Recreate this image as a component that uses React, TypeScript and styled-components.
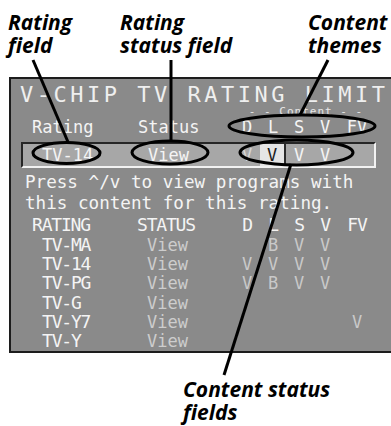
import styled, { createGlobalStyle } from "styled-components";

const GlobalStyle = createGlobalStyle`
  html, body {
    margin: 0;
    padding: 0;
    background: #fff;
  }
`;

const COLS = "107px 106px 26px 26px 26px 26px 38px";
const SEL_COLS = "105px 106px 26px 26px 26px 26px 36px";

const Page = styled.div`
  position: relative;
  width: 391px;
  height: 426px;
  overflow: hidden;
  background: #fff;
`;

const Callouts = styled.div`
  height: 77px;
  box-sizing: border-box;
  padding: 11px 0 0 8px;
  display: grid;
  grid-template-columns: 112px 188px 1fr;
`;

const Label = styled.div`
  font-family: "Open Sans", "DejaVu Sans", sans-serif;
  font-style: italic;
  font-weight: 700;
  font-size: 21px;
  line-height: 23px;
  color: #000;
  white-space: nowrap;
`;

const BottomLabel = styled(Label)`
  margin: 25px 0 0 183px;
`;

const Panel = styled.div`
  margin-left: 9px;
  width: 400px;
  height: 276px;
  box-sizing: border-box;
  border: 2px solid #1c1c1c;
  border-right: none;
  background: #8a8a8a;
  padding-top: 4px;
`;

const Heading = styled.div`
  font-family: "DejaVu Sans Mono", monospace;
  font-size: 22px;
  line-height: 24px;
  letter-spacing: 3.5px;
  color: #efefef;
  padding-left: 9px;
  white-space: nowrap;
`;

const Row = styled.div<{ $h: number }>`
  display: grid;
  grid-template-columns: ${COLS};
  grid-auto-rows: auto;
  margin-left: 10px;
  width: 355px;
  height: ${p => p.$h}px;
  align-items: center;
`;

const SubHeader = styled.div`
  display: grid;
  grid-template-columns: ${COLS};
  grid-template-rows: 10px 20px;
  margin-left: 10px;
  width: 355px;
  height: 32px;
  align-items: center;
`;

const ContentTag = styled.div`
  grid-column: 3 / 8;
  grid-row: 1;
  text-align: center;
  font-family: "DejaVu Sans Mono", monospace;
  font-size: 11px;
  line-height: 10px;
  letter-spacing: 1px;
  color: #e8e8e8;
  padding-left: 2px;
`;

const Cell = styled.div<{ $pad?: number; $center?: boolean; $tone?: string; $row?: number }>`
  font-family: "DejaVu Sans Mono", monospace;
  font-size: 17px;
  line-height: 20px;
  color: ${p => p.$tone ?? "#f4f4f4"};
  padding-left: ${p => p.$pad ?? 0}px;
  text-align: ${p => (p.$center ? "center" : "left")};
  white-space: nowrap;
  ${p => (p.$row ? `grid-row: ${p.$row};` : "")}
`;

const TableCell = styled(Cell)`
  font-size: 18px;
  letter-spacing: -1.2px;
`;

const SelectedRow = styled.div`
  display: grid;
  grid-template-columns: ${SEL_COLS};
  margin: 3px 0 0 10px;
  width: 355px;
  height: 26px;
  box-sizing: border-box;
  border-top: 2px solid #262626;
  border-left: 2px solid #262626;
  border-bottom: 2px solid #f2f2f2;
  border-right: 2px solid #f2f2f2;
  background: #a7a7a7;
  align-items: center;
`;

const ActiveCell = styled(Cell)`
  align-self: stretch;
  display: flex;
  align-items: center;
  justify-content: center;
  background: #e5e5e5;
  color: #1e1e1e;
  border-right: 2px solid #2a2a2a;
`;

const Hint = styled.div`
  font-family: "DejaVu Sans Mono", monospace;
  font-size: 17.6px;
  line-height: 21px;
  color: #f4f4f4;
  margin-top: 4px;
  padding-left: 14px;
  white-space: pre;
`;

const Overlay = styled.svg`
  position: absolute;
  left: 0;
  top: 0;
  pointer-events: none;
`;

const THEMES = ["D", "L", "S", "V", "FV"];

const RATINGS: { name: string; marks: string[] }[] = [
  { name: "TV-MA", marks: ["", "B", "V", "V", ""] },
  { name: "TV-14", marks: ["V", "V", "V", "V", ""] },
  { name: "TV-PG", marks: ["V", "B", "V", "V", ""] },
  { name: "TV-G", marks: ["", "", "", "", ""] },
  { name: "TV-Y7", marks: ["", "", "", "", "V"] },
  { name: "TV-Y", marks: ["", "", "", "", ""] },
];

export default function App() {
  return (
    <Page>
      <GlobalStyle />
      <Callouts>
        <Label>Rating<br />field</Label>
        <Label>Rating<br />status field</Label>
        <Label>Content<br />themes</Label>
      </Callouts>

      <Panel>
        <Heading>V-CHIP TV RATING LIMIT</Heading>

        <SubHeader>
          <ContentTag>- - Content - -</ContentTag>
          <Cell $row={2} $pad={11}>Rating</Cell>
          <Cell $row={2} $pad={10}>Status</Cell>
          {THEMES.map(t => (
            <Cell key={t} $row={2} $center>{t}</Cell>
          ))}
        </SubHeader>

        <SelectedRow>
          <Cell $pad={19}>TV-14</Cell>
          <Cell $pad={20}>View</Cell>
          <Cell $center $tone="#d6d6d6">V</Cell>
          <ActiveCell>V</ActiveCell>
          <Cell $center>V</Cell>
          <Cell $center>V</Cell>
          <Cell />
        </SelectedRow>

        <Hint>{"Press ^/v to view programs with\nthis content for this rating."}</Hint>

        <Row $h={21}>
          <TableCell $pad={11}>RATING</TableCell>
          <TableCell $pad={9}>STATUS</TableCell>
          {THEMES.map(t => (
            <TableCell key={t} $center>{t}</TableCell>
          ))}
        </Row>

        {RATINGS.map(r => (
          <Row key={r.name} $h={19.2}>
            <TableCell $pad={21}>{r.name}</TableCell>
            <Cell $pad={19} $tone="#cdcdcd">View</Cell>
            {r.marks.map((m, i) => (
              <Cell key={i} $center $tone="#c9c9c9">{m}</Cell>
            ))}
          </Row>
        ))}
      </Panel>

      <BottomLabel>Content status<br />fields</BottomLabel>

      <Overlay width={391} height={426} viewBox="0 0 391 426">
        <g fill="none" stroke="#000" strokeWidth={3}>
          <ellipse cx={66.5} cy={153} rx={33.5} ry={10.5} />
          <ellipse cx={170} cy={152.5} rx={38} ry={11.5} />
          <ellipse cx={302} cy={126} rx={73} ry={11} />
          <ellipse cx={296.5} cy={152.5} rx={56.5} ry={12.5} />
          <line x1={33} y1={60} x2={68} y2={142} />
          <line x1={171} y1={60} x2={171} y2={141} />
          <line x1={328} y1={60} x2={300} y2={115} />
          <line x1={291} y1={164} x2={224} y2={375} />
        </g>
      </Overlay>
    </Page>
  );
}
